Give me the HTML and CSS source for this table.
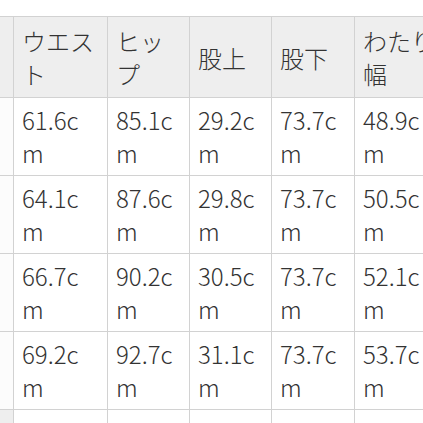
FILE: index.html
```html
<!DOCTYPE html>
<html lang="ja">
<head>
<meta charset="utf-8">
<link rel="stylesheet" href="styles.css">
</head>
<body>
<div class="frame">
<table class="size-table">
<colgroup>
<col class="c0"><col class="c1"><col class="c2"><col class="c3"><col class="c4"><col class="c5">
</colgroup>
<thead>
<tr><th></th><th>ウエスト</th><th>ヒップ</th><th>股上</th><th>股下</th><th>わたり幅</th></tr>
</thead>
<tbody>
<tr><th class="rh"></th><td>61.6cm</td><td>85.1cm</td><td>29.2cm</td><td>73.7cm</td><td>48.9cm</td></tr>
<tr><th class="rh"></th><td>64.1cm</td><td>87.6cm</td><td>29.8cm</td><td>73.7cm</td><td>50.5cm</td></tr>
<tr><th class="rh"></th><td>66.7cm</td><td>90.2cm</td><td>30.5cm</td><td>73.7cm</td><td>52.1cm</td></tr>
<tr><th class="rh"></th><td>69.2cm</td><td>92.7cm</td><td>31.1cm</td><td>73.7cm</td><td>53.7cm</td></tr>
<tr class="next"><th class="rh2"></th><td></td><td></td><td></td><td></td><td></td></tr>
</tbody>
</table>
</div>
</body>
</html>
```
FILE: styles.css
```css
html, body {
  margin: 0;
  padding: 0;
  background: #ffffff;
}
.frame {
  width: 423px;
  height: 423px;
  overflow: hidden;
  padding-top: 16px;
  box-sizing: border-box;
}
.size-table {
  margin-left: -80px;
  border-collapse: collapse;
  table-layout: fixed;
  width: 528px;
  font-family: "Noto Sans CJK JP", "Noto Sans", sans-serif;
  font-size: 24px;
  font-weight: 300;
  line-height: 33px;
  color: #333333;
}
.c0 { width: 93px; }
.c1 { width: 94px; }
.c2 { width: 82px; }
.c3 { width: 82px; }
.c4 { width: 83px; }
.c5 { width: 94px; }
.size-table th,
.size-table td {
  border: 1px solid #d2d2d2;
  text-align: left;
  vertical-align: middle;
  word-break: break-all;
}
.size-table thead th {
  background: #eeeeee;
  font-weight: 300;
  padding: 7px 9px 7px 8px;
  word-break: normal;
}
.size-table td {
  padding: 5px 9px 6px 8px;
  background: #ffffff;
}
.size-table .rh {
  background: #fcfcfc;
  padding: 0;
  height: 66px;
}
.size-table .rh2 {
  background: #eeeeee;
  padding: 0;
  height: 40px;
}
.next td {
  height: 40px;
}
```
